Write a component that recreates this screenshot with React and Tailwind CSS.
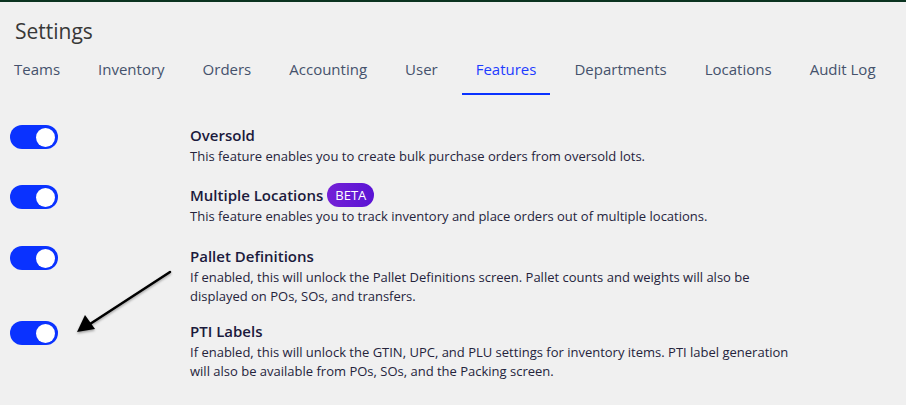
import React from "react";

const tabs = ["Teams", "Inventory", "Orders", "Accounting", "User", "Features", "Departments", "Locations", "Audit Log"];

function Toggle() {
  return (
    <div className="w-[48px] h-[24px] rounded-full bg-[#0a32ff] flex items-center justify-end pr-[3px]">
      <div className="w-[19px] h-[19px] rounded-full bg-white" />
    </div>
  );
}

const features = [
  { title: "Oversold", mt: "", desc: "This feature enables you to create bulk purchase orders from oversold lots." },
  { title: "Multiple Locations", mt: "mt-[17px]", beta: true, desc: "This feature enables you to track inventory and place orders out of multiple locations." },
  { title: "Pallet Definitions", mt: "mt-[18px]", desc: "If enabled, this will unlock the Pallet Definitions screen. Pallet counts and weights will also be displayed on POs, SOs, and transfers." },
  { title: "PTI Labels", mt: "mt-[13px]", desc: "If enabled, this will unlock the GTIN, UPC, and PLU settings for inventory items. PTI label generation will also be available from POs, SOs, and the Packing screen." },
];

export default function App() {
  return (
    <div className="w-[906px] h-[405px] bg-[#f0f0f0] border-t-2 border-[#0b3320] relative overflow-hidden" style={{ fontFamily: '"Open Sans", sans-serif' }}>
      <h1 className="pl-[15px] pt-[15px] text-[21px] leading-[28px] font-medium text-[#383838]">Settings</h1>
      <div className="flex gap-[38px] pl-[14px] mt-[11px] text-[15px] text-[#45526c] whitespace-nowrap">
        {tabs.map((t) => (
          <div key={t} className="relative h-[38px] leading-[26px]">
            <span className={t === "Features" ? "text-[#1e3cff]" : ""}>{t}</span>
            {t === "Features" && <div className="absolute -left-[14px] -right-[14px] top-[37px] h-[2px] bg-[#0a32ff]" />}
          </div>
        ))}
      </div>
      <div className="mt-[29px] flex flex-col">
        {features.map((f) => (
          <div key={f.title} className={"flex " + f.mt}>
            <div className="w-[190px] pl-[10px] pt-[2px] shrink-0">
              <Toggle />
            </div>
            <div className="w-[610px]">
              <div className="flex items-center h-[24px] text-[15px] font-semibold text-[#1b1a3c]">
                {f.title}
                {f.beta && (
                  <span className="ml-[4px] h-[24px] px-[8px] rounded-full bg-gradient-to-r from-[#7420d6] to-[#5a12d4] text-white text-[13px] font-normal leading-[24px]">BETA</span>
                )}
              </div>
              <p className="text-[13px] leading-[19px] text-[#25243c] w-[602px]">{f.desc}</p>
            </div>
          </div>
        ))}
      </div>
      <svg className="absolute left-0 top-0" width="906" height="405" style={{ pointerEvents: "none" }}>
        <defs>
          <filter id="sh" x="-20%" y="-20%" width="140%" height="140%">
            <feDropShadow dx="0" dy="1.5" stdDeviation="1.2" floodColor="#000" floodOpacity="0.35" />
          </filter>
        </defs>
        <g filter="url(#sh)">
          <line x1="170" y1="270" x2="90" y2="322" stroke="#000" strokeWidth="2.5" strokeLinecap="round" />
          <polygon points="77,330 85,313 95,327" fill="#000" />
        </g>
      </svg>
    </div>
  );
}
